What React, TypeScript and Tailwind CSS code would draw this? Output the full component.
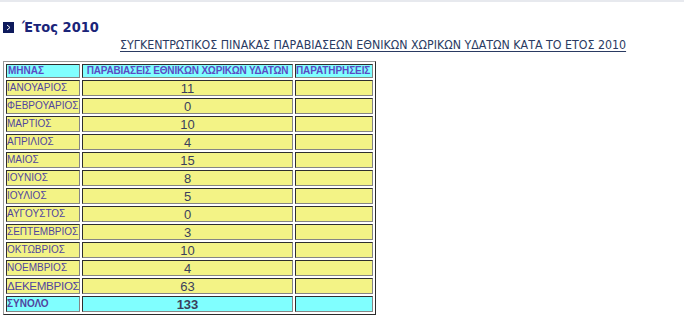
import React from 'react';

const months: [string, string, string?][] = [
    ['ΙΑΝΟΥΑΡΙΟΣ', '11'],
    ['ΦΕΒΡΟΥΑΡΙΟΣ', '0'],
    ['ΜΑΡΤΙΟΣ', '10'],
    ['ΑΠΡΙΛΙΟΣ', '4'],
    ['ΜΑΙΟΣ', '15'],
    ['ΙΟΥΝΙΟΣ', '8'],
    ['ΙΟΥΛΙΟΣ', '5'],
    ['ΑΥΓΟΥΣΤΟΣ', '0'],
    ['ΣΕΠΤΕΜΒΡΙΟΣ', '3'],
    ['ΟΚΤΩΒΡΙΟΣ', '10'],
    ['ΝΟΕΜΒΡΙΟΣ', '4'],
    ['ΔΕΚΕΜΒΡΙΟΣ', '63', 'big'],
];

// inset cell border like an old border=1 table
const cell = 'border border-t-[#2e2e2e] border-l-[#2e2e2e] border-b-[#858585] border-r-[#858585] p-0 overflow-hidden whitespace-nowrap';

const App = () => {
    return (
        <div className="w-[684px] h-[320px] bg-white border-t-2 border-[#e7e9ee] font-['Liberation_Sans',Arial,sans-serif]">
            <div className="flex items-center gap-2 pl-[3px] pt-[16px] h-[34px]">
                <div className="w-[11px] h-[11px] bg-[#0e1a5c] flex items-center justify-center">
                    <svg width="7" height="7" viewBox="0 0 7 7">
                        <path d="M2 1 L5 3.5 L2 6" stroke="#ffffff" strokeWidth="1" fill="none" />
                    </svg>
                </div>
                <span className="font-['DejaVu_Sans_Condensed',sans-serif] font-bold text-[14.5px] text-[#1a2479] leading-none">
                    Έτος 2010
                </span>
            </div>
            <div className="pl-[120px] pt-[3px] h-[25px] leading-none text-[12.3px]">
                <span className="font-['DejaVu_Sans_Condensed',sans-serif] text-[#2a3a62] underline underline-offset-2">
                    ΣΥΓΚΕΝΤΡΩΤΙΚΟΣ ΠΙΝΑΚΑΣ ΠΑΡΑΒΙΑΣΕΩΝ ΕΘΝΙΚΩΝ ΧΩΡΙΚΩΝ ΥΔΑΤΩΝ ΚΑΤΑ ΤΟ ΕΤΟΣ 2010
                </span>
            </div>
            <div className="pl-[3px]">
                <table className="table-fixed w-[373px] border-separate border-spacing-[2px] border border-t-[#9a9a9a] border-l-[#9a9a9a] border-b-[#2a2a2a] border-r-[#2a2a2a]">
                    <colgroup>
                        <col className="w-[74px]" />
                        <col className="w-[211px]" />
                        <col className="w-[78px]" />
                    </colgroup>
                    <tbody>
                        <tr className="bg-[#80ffff] text-[#5b4bc4] font-bold text-[10px] leading-none">
                            <td className={`${cell} h-[14px] pl-[1px]`}>ΜΗΝΑΣ</td>
                            <td className={`${cell} h-[14px] text-center tracking-[-0.2px]`}>ΠΑΡΑΒΙΑΣΕΙΣ ΕΘΝΙΚΩΝ ΧΩΡΙΚΩΝ ΥΔΑΤΩΝ</td>
                            <td className={`${cell} h-[14px] tracking-[-0.1px]`}>ΠΑΡΑΤΗΡΗΣΕΙΣ</td>
                        </tr>
                        {months.map(([m, v, big]) => (
                            <tr key={m} className="bg-[#f3f386] leading-none">
                                <td className={`${cell} h-[16px] text-[#51459e] ${big ? 'text-[11.6px] tracking-[-0.3px]' : 'text-[10px]'}`}>{m}</td>
                                <td className={`${cell} h-[16px] text-center text-[13px] text-[#3b3f5c]`}>{v}</td>
                                <td className={`${cell} h-[16px]`}></td>
                            </tr>
                        ))}
                        <tr className="bg-[#80ffff] leading-none font-bold">
                            <td className={`${cell} h-[16px] text-[10px] text-[#51459e]`}>ΣΥΝΟΛΟ</td>
                            <td className={`${cell} h-[16px] text-center text-[13px] text-[#3b3f5c]`}>133</td>
                            <td className={`${cell} h-[16px]`}></td>
                        </tr>
                    </tbody>
                </table>
            </div>
        </div>
    );
};

export default App;
